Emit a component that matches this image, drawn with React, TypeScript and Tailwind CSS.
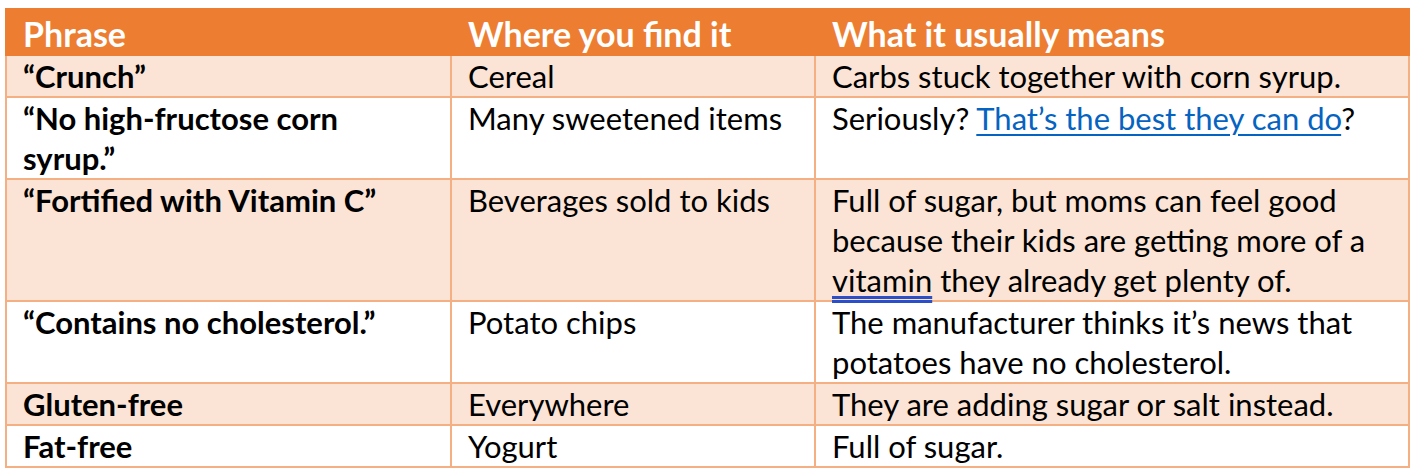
import React from "react";

type Row = {
  phrase: string;
  where: string;
  meaning: React.ReactNode;
  shaded: boolean;
};

const rows: Row[] = [
  {
    phrase: "“Crunch”",
    where: "Cereal",
    meaning: "Carbs stuck together with corn syrup.",
    shaded: true,
  },
  {
    phrase: "“No high-fructose corn syrup.”",
    where: "Many sweetened items",
    meaning: (
      <>
        Seriously?{" "}
        <a href="#" className="text-[#0563c1] underline underline-offset-[4px] decoration-[1.5px]">
          That’s the best they can do
        </a>
        ?
      </>
    ),
    shaded: false,
  },
  {
    phrase: "“Fortified with Vitamin C”",
    where: "Beverages sold to kids",
    meaning: (
      <>
        Full of sugar, but moms can feel good because their kids are getting more of a{" "}
        <span className="underline decoration-double decoration-[#2c4fc7] underline-offset-[4px]">vitamin</span> they
        already get plenty of.
      </>
    ),
    shaded: true,
  },
  {
    phrase: "“Contains no cholesterol.”",
    where: "Potato chips",
    meaning: "The manufacturer thinks it’s news that potatoes have no cholesterol.",
    shaded: false,
  },
  {
    phrase: "Gluten-free",
    where: "Everywhere",
    meaning: "They are adding sugar or salt instead.",
    shaded: true,
  },
  {
    phrase: "Fat-free",
    where: "Yogurt",
    meaning: "Full of sugar.",
    shaded: false,
  },
];

export default function App() {
  return (
    <div className="w-[1420px] h-[468px] bg-white pt-2 pl-[5px] overflow-hidden font-['Lato',sans-serif] text-[31px] text-black">
      <div className="w-[1405px] border-x-2 border-b-2 border-[#f4b083]">
        {/* Header */}
        <div className="grid grid-cols-[445px_364px_592px] h-12 bg-[#ed7d31] items-center text-white font-bold text-[34px] -mx-[2px] px-[2px]">
          <div className="pl-4">Phrase</div>
          <div className="pl-4">Where you find it</div>
          <div className="pl-4">What it usually means</div>
        </div>

        {/* Body */}
        {rows.map((row, i) => (
          <div
            key={i}
            className={`grid grid-cols-[445px_364px_592px] leading-[40px] border-b-2 border-[#f4b083] last:border-b-0 ${
              row.shaded ? "bg-[#fbe4d5]" : "bg-white"
            }`}
          >
            <div className="pl-4 pr-8 font-bold border-r-2 border-[#f4b083]">{row.phrase}</div>
            <div className="pl-4 pr-3 border-r-2 border-[#f4b083]">{row.where}</div>
            <div className="pl-4 pr-4">{row.meaning}</div>
          </div>
        ))}
      </div>
    </div>
  );
}
